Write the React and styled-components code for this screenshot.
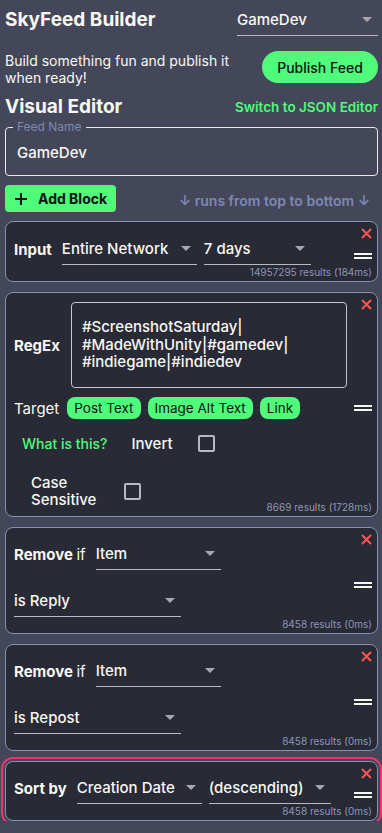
import React from 'react';
import styled, { createGlobalStyle } from 'styled-components';

const GlobalStyle = createGlobalStyle`
  body {
    margin: 0;
    background: #44475a;
    font-family: Inter, 'Noto Sans', sans-serif;
    color: #f8f8f2;
  }
`;

function Select({ value, width }) {
  return (
    <StyledSelect $width={width}>
      <span>{value}</span>
      <Arrow />
    </StyledSelect>
  );
}

function Handle() {
  return (
    <StyledHandle>
      <span />
      <span />
    </StyledHandle>
  );
}

function Block({ children, results, padTop = 10, resultsGap = 1, outlined }) {
  return (
    <Card $padTop={padTop} $outlined={outlined}>
      <CloseButton>
        <svg width='11' height='11' viewBox='0 0 11 11'>
          <path d='M1 1L10 10M10 1L1 10' stroke='#ff5555' strokeWidth='2' />
        </svg>
      </CloseButton>
      <CardBody>{children}</CardBody>
      <Handle />
      <Results $gap={resultsGap}>{results}</Results>
    </Card>
  );
}

function Check({ ml }) {
  return <CheckBox $ml={ml} />;
}

export default function App() {
  return (
    <Page>
      <GlobalStyle />
      <HeaderRow>
        <Title>SkyFeed Builder</Title>
        <Select value='GameDev' width={141} />
      </HeaderRow>
      <IntroRow>
        <Intro>
          Build something fun and publish it
          <br />
          when ready!
        </Intro>
        <PublishButton>Publish Feed</PublishButton>
      </IntroRow>
      <EditorRow>
        <Title>Visual Editor</Title>
        <GreenLink>Switch to JSON Editor</GreenLink>
      </EditorRow>
      <NameField>
        <legend>Feed Name</legend>
        <div>GameDev</div>
      </NameField>
      <AddRow>
        <AddButton>
          <svg width='14' height='14' viewBox='0 0 14 14'>
            <path d='M7 1V13M1 7H13' stroke='#111' strokeWidth='2' />
          </svg>
          Add Block
        </AddButton>
        <RunsHint>↓ runs from top to bottom ↓</RunsHint>
      </AddRow>

      <Blocks>
        <Block results='14957295 results (184ms)' padTop={11}>
          <Row>
            <Label>Input</Label>
            <Select value='Entire Network' width={135} />
            <Select value='7 days' width={107} />
          </Row>
        </Block>

        <Block results='8669 results (1728ms)' padTop={9} resultsGap={-7}>
          <Row>
            <Label>RegEx</Label>
            <RegexBox>
              <div>#ScreenshotSaturday|</div>
              <div>#MadeWithUnity|#gamedev|</div>
              <div>#indiegame|#indiedev</div>
            </RegexBox>
          </Row>
          <TargetRow>
            <PlainLabel>Target</PlainLabel>
            <Chip>Post Text</Chip>
            <Chip>Image Alt Text</Chip>
            <Chip>Link</Chip>
          </TargetRow>
          <OptionRow $mt={0}>
            <HelpLink>What is this?</HelpLink>
            <OptionLabel $ml={24}>Invert</OptionLabel>
            <Check ml={25} />
          </OptionRow>
          <OptionRow $mt={6}>
            <OptionLabel $ml={17}>
              <div>Case</div>
              <div>Sensitive</div>
            </OptionLabel>
            <Check ml={28} />
          </OptionRow>
        </Block>

        <Block results='8458 results (0ms)'>
          <Row>
            <Label>
              Remove <span>if</span>
            </Label>
            <Select value='Item' width={125} />
          </Row>
          <Row $mt={-1}>
            <Select value='is Reply' width={167} />
          </Row>
        </Block>

        <Block results='8458 results (0ms)'>
          <Row>
            <Label>
              Remove <span>if</span>
            </Label>
            <Select value='Item' width={125} />
          </Row>
          <Row $mt={-1}>
            <Select value='is Repost' width={167} />
          </Row>
        </Block>

        <Block results='8458 results (0ms)' outlined>
          <Row>
            <Label>Sort by</Label>
            <Select value='Creation Date' width={125} />
            <Select value='(descending)' width={122} />
          </Row>
        </Block>
      </Blocks>
    </Page>
  );
}

const Page = styled.div`
  padding: 0 4px 0 5px;
  display: flex;
  flex-direction: column;
`;

const HeaderRow = styled.div`
  display: flex;
  justify-content: space-between;
  align-items: center;
  height: 32px;
  margin-top: 4px;
`;

const Title = styled.div`
  font-size: 19px;
  font-weight: 700;
  line-height: 24px;
`;

const StyledSelect = styled.div`
  width: ${(p) => p.$width}px;
  height: 32px;
  box-sizing: border-box;
  display: flex;
  align-items: center;
  justify-content: space-between;
  border-bottom: 1px solid #b9b9c0;
  font-size: 15px;
  font-weight: 500;
  padding-right: 6px;
  flex-shrink: 0;
`;

const Arrow = styled.span`
  width: 0;
  height: 0;
  border-left: 5px solid transparent;
  border-right: 5px solid transparent;
  border-top: 5px solid #a8a8b0;
`;

const IntroRow = styled.div`
  display: flex;
  justify-content: space-between;
  align-items: center;
  margin-top: 16px;
`;

const Intro = styled.div`
  font-size: 14px;
  line-height: 17px;
`;

const PublishButton = styled.div`
  width: 116px;
  height: 32px;
  border-radius: 16px;
  background: #50fa7b;
  color: #111;
  font-size: 14px;
  font-weight: 500;
  display: flex;
  align-items: center;
  justify-content: center;
  margin-top: -4px;
`;

const EditorRow = styled.div`
  display: flex;
  justify-content: space-between;
  align-items: center;
  margin-top: 9px;
`;

const GreenLink = styled.div`
  color: #50fa7b;
  font-size: 13.5px;
  font-weight: 600;
`;

const NameField = styled.fieldset`
  margin: 1px 0 0;
  height: 56px;
  box-sizing: border-box;
  border: 1px solid #e8e8ee;
  border-radius: 4px;
  padding: 0 11px;

  legend {
    font-size: 12px;
    color: #7e88b2;
    padding: 0 4px;
    margin-left: -4px;
    line-height: 14px;
  }

  div {
    font-size: 15px;
    font-weight: 500;
    margin-top: 9px;
  }
`;

const AddRow = styled.div`
  display: flex;
  justify-content: space-between;
  align-items: center;
  margin-top: 9px;
  padding-right: 8px;
`;

const AddButton = styled.div`
  width: 111px;
  height: 27px;
  box-sizing: border-box;
  border-radius: 4px;
  background: #50fa7b;
  color: #111;
  font-size: 14px;
  font-weight: 700;
  display: flex;
  align-items: center;
  gap: 10px;
  padding-left: 9px;
`;

const RunsHint = styled.div`
  color: #7e88b2;
  font-size: 14px;
  font-weight: 600;
  margin-top: 3px;
`;

const Blocks = styled.div`
  display: flex;
  flex-direction: column;
  gap: 10px;
  margin-top: 9px;
`;

const Card = styled.div`
  position: relative;
  display: grid;
  grid-template-columns: 1fr 18px;
  background: #282a36;
  border: 1px solid #8890b0;
  border-radius: 8px;
  padding: ${(p) => p.$padTop}px 5px 2px 8px;
  ${(p) => p.$outlined && 'outline: 2px solid #f0336b; outline-offset: 2px;'}
`;

const CloseButton = styled.div`
  position: absolute;
  top: 6px;
  right: 5px;
  line-height: 0;
`;

const CardBody = styled.div`
  grid-row: 1;
  grid-column: 1;
  display: flex;
  flex-direction: column;
  gap: 16px;
`;

const StyledHandle = styled.div`
  grid-row: 1 / 3;
  grid-column: 2;
  align-self: center;
  display: flex;
  flex-direction: column;
  gap: 2px;

  span {
    display: block;
    height: 2px;
    width: 18px;
    background: #f8f8f2;
  }
`;

const Results = styled.div`
  grid-row: 2;
  grid-column: 1 / 3;
  justify-self: end;
  font-size: 10px;
  line-height: 13px;
  color: #8f97b4;
  margin-top: ${(p) => p.$gap}px;
`;

const Row = styled.div`
  display: flex;
  align-items: center;
  gap: 7px;
  margin-top: ${(p) => p.$mt || 0}px;
`;

const Label = styled.div`
  font-size: 15px;
  font-weight: 700;
  margin-right: 3px;

  span {
    font-weight: 400;
  }
`;

const RegexBox = styled.div`
  width: 276px;
  height: 86px;
  box-sizing: border-box;
  border: 1px solid #c6c6cc;
  border-radius: 4px;
  padding: 15px 10px;
  font-size: 15px;
  font-weight: 500;
  line-height: 17.5px;
  margin-left: 1px;
`;

const TargetRow = styled.div`
  display: flex;
  align-items: center;
  gap: 7px;
  margin-top: -7px;
`;

const PlainLabel = styled.div`
  font-size: 15px;
  margin-right: 1px;
`;

const Chip = styled.div`
  height: 22px;
  border-radius: 8px;
  background: #50fa7b;
  color: #111;
  font-size: 13.5px;
  padding: 0 7px;
  display: flex;
  align-items: center;
`;

const OptionRow = styled.div`
  display: flex;
  align-items: center;
  margin-top: ${(p) => p.$mt}px;
`;

const HelpLink = styled.div`
  color: #50fa7b;
  font-size: 14px;
  font-weight: 500;
  margin-left: 8px;
`;

const OptionLabel = styled.div`
  font-size: 15px;
  font-weight: 500;
  line-height: 17px;
  margin-left: ${(p) => p.$ml}px;
`;

const CheckBox = styled.div`
  width: 17px;
  height: 17px;
  box-sizing: border-box;
  border: 2px solid #b8b8be;
  border-radius: 2px;
  margin-left: ${(p) => p.$ml}px;
`;
